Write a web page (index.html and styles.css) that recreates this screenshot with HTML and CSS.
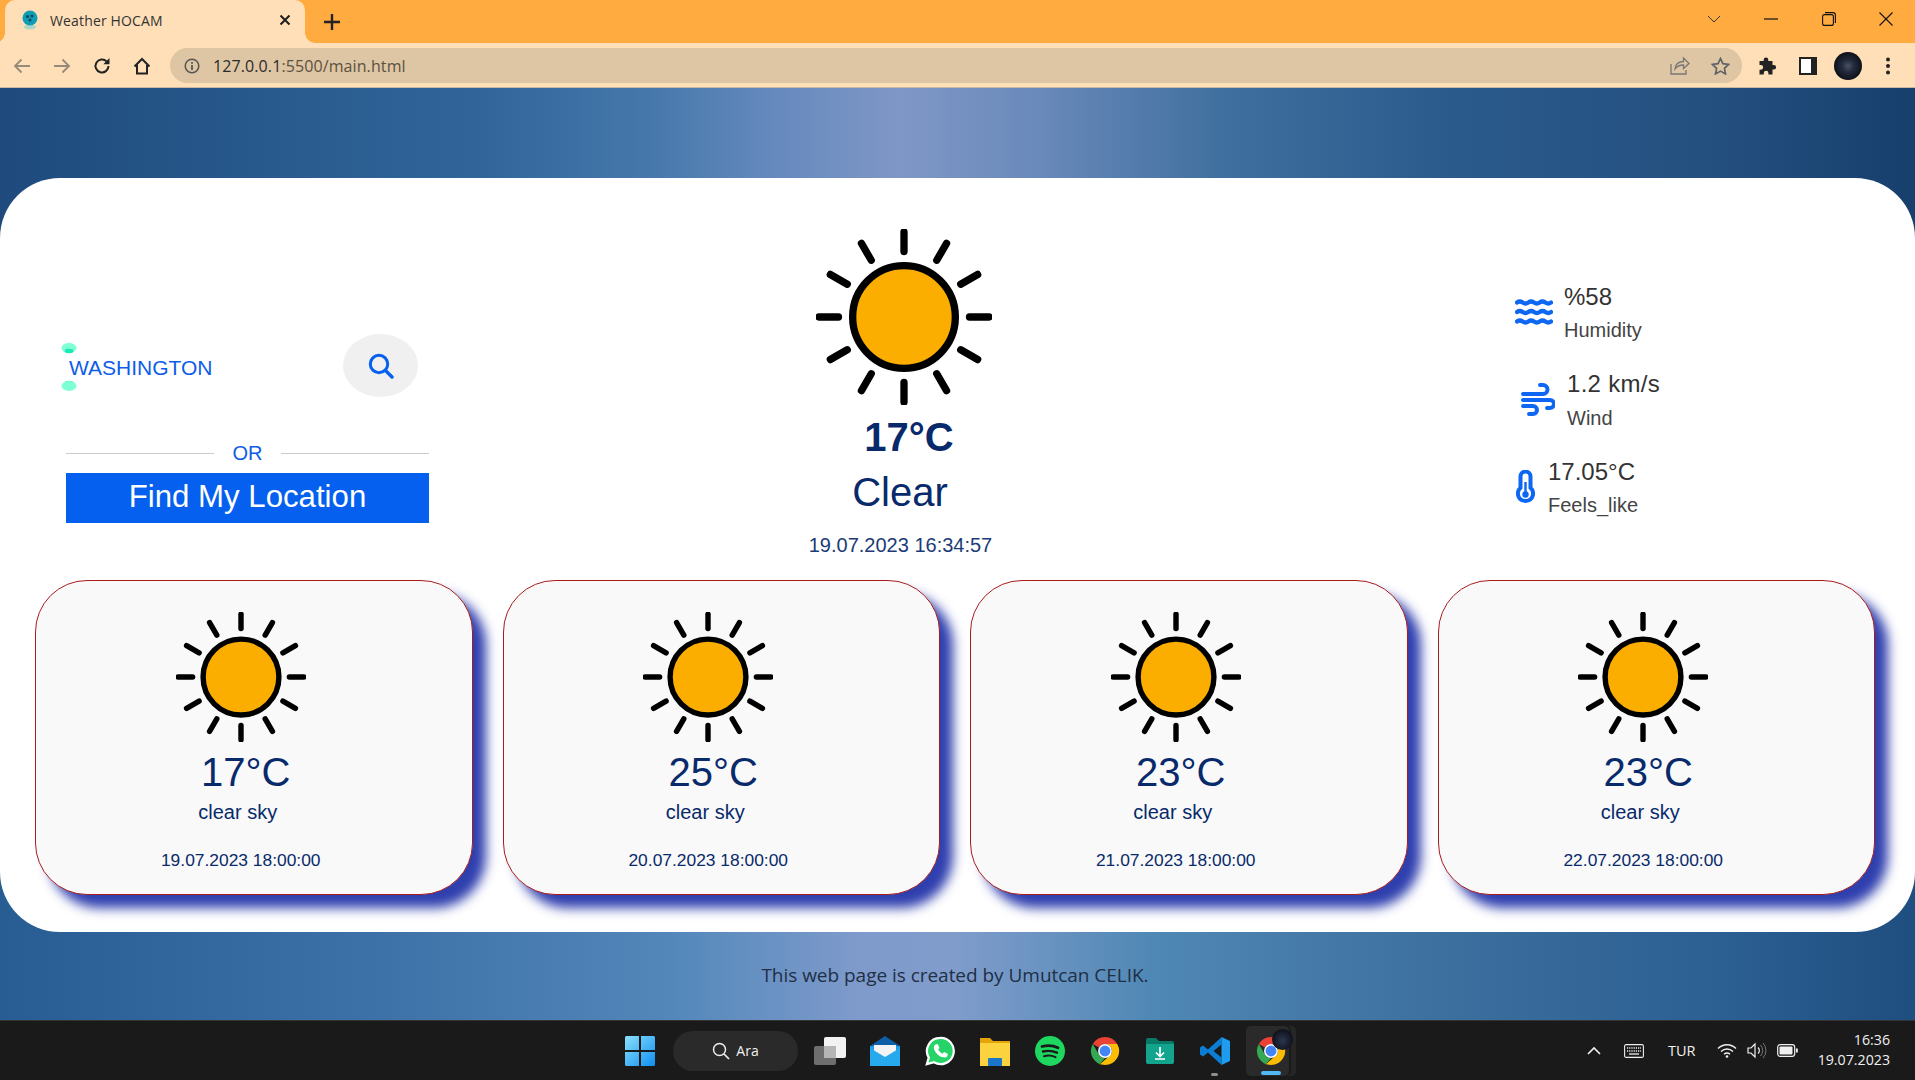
FILE: index.html
```html
<!DOCTYPE html>
<html lang="en">
<head>
<meta charset="utf-8">
<title>Weather HOCAM</title>
<link rel="stylesheet" href="styles.css">
</head>
<body>
<svg class="defs" width="0" height="0" aria-hidden="true">
  <defs>
    <symbol id="sun" viewBox="-90 -90 180 180">
      <circle r="52.500" fill="#fbae00" stroke="#000" stroke-width="7.500"/>
      <g stroke="#000" stroke-width="7.500" stroke-linecap="round">
        <line y1="-67" y2="-87"/>
        <line y1="-67" y2="-87" transform="rotate(30)"/>
        <line y1="-67" y2="-87" transform="rotate(60)"/>
        <line y1="-67" y2="-87" transform="rotate(90)"/>
        <line y1="-67" y2="-87" transform="rotate(120)"/>
        <line y1="-67" y2="-87" transform="rotate(150)"/>
        <line y1="-67" y2="-87" transform="rotate(180)"/>
        <line y1="-67" y2="-87" transform="rotate(210)"/>
        <line y1="-67" y2="-87" transform="rotate(240)"/>
        <line y1="-67" y2="-87" transform="rotate(270)"/>
        <line y1="-67" y2="-87" transform="rotate(300)"/>
        <line y1="-67" y2="-87" transform="rotate(330)"/>
      </g>
    </symbol>
    <symbol id="chrome" viewBox="0 0 32 32">
      <path d="M16 1a15 15 0 0 1 13 7.500H16a7.500 7.500 0 0 0-6.500 3.750L3 8.500A15 15 0 0 1 16 1z" fill="#ea4335"/>
      <path d="M3 8.500l6.500 11.250A7.500 7.500 0 0 0 16 23.500l-5.500 6.500A15 15 0 0 1 3 8.500z" fill="#34a853"/>
      <path d="M29 8.500A15 15 0 0 1 16 31l-5.500-1 .0-.0L22.500 19.750A7.500 7.500 0 0 0 22.500 12.250 7.500 7.500 0 0 0 16 8.500z" fill="#fbbc04"/>
      <circle cx="16" cy="16" r="7.400" fill="#fff"/>
      <circle cx="16" cy="16" r="5.800" fill="#4285f4"/>
    </symbol>
  </defs>
</svg>

<header class="browser">
  <div class="tabstrip">
    <div class="tab">
      <svg class="favicon" width="18" height="20" viewBox="0 0 18 20"><ellipse cx="9" cy="17" rx="6" ry="2.500" fill="#a9d7c8"/><circle cx="9" cy="8" r="7.500" fill="#0e9db5"/><circle cx="6.500" cy="6.500" r="1.500" fill="#0b4660"/><circle cx="11" cy="6" r="1.500" fill="#0b4660"/><circle cx="9" cy="10" r="1.500" fill="#0b4660"/></svg>
      <span class="tab-title">Weather HOCAM</span>
      <svg class="tab-close" width="12" height="12" viewBox="0 0 12 12"><path d="M1.500 1.500l9 9M10.500 1.500l-9 9" stroke="#1d1d1d" stroke-width="2" fill="none"/></svg>
    </div>
    <svg class="new-tab" width="18" height="18" viewBox="0 0 18 18"><path d="M9 1v16M1 9h16" stroke="#222" stroke-width="2.400" fill="none"/></svg>
    <div class="win-controls">
      <span class="win-btn"><svg width="14" height="8" viewBox="0 0 14 8"><path d="M1 1l6 6 6-6" stroke="#333" stroke-width="1" fill="none"/></svg></span>
      <span class="win-btn"><svg width="14" height="2" viewBox="0 0 14 2"><path d="M0 1h14" stroke="#111" stroke-width="1.200"/></svg></span>
      <span class="win-btn"><svg width="14" height="14" viewBox="0 0 14 14"><rect x=".6" y="2.600" width="10.800" height="10.800" rx="2" fill="none" stroke="#111" stroke-width="1.100"/><path d="M3 .6h8a2.400 2.400 0 0 1 2.400 2.400v8" fill="none" stroke="#111" stroke-width="1.100"/></svg></span>
      <span class="win-btn"><svg width="14" height="14" viewBox="0 0 14 14"><path d="M.5.500l13 13M13.500.500l-13 13" stroke="#111" stroke-width="1.100" fill="none"/></svg></span>
    </div>
  </div>
  <div class="toolbar">
    <span class="tool-btn"><svg width="18" height="16" viewBox="0 0 18 16"><path d="M17 8H2M8.500 1.500L2 8l6.500 6.500" stroke="#978a78" stroke-width="1.800" fill="none"/></svg></span>
    <span class="tool-btn"><svg width="18" height="16" viewBox="0 0 18 16"><path d="M1 8h15M9.500 1.500L16 8l-6.500 6.500" stroke="#978a78" stroke-width="1.800" fill="none"/></svg></span>
    <span class="tool-btn"><svg width="18" height="18" viewBox="0 0 18 18"><path d="M15.500 9a6.500 6.500 0 1 1-1.900-4.600" stroke="#222" stroke-width="2" fill="none"/><path d="M16.500 1v6.200h-6.200z" fill="#222"/></svg></span>
    <span class="tool-btn"><svg width="18" height="18" viewBox="0 0 18 18"><path d="M1.500 9.500L9 2l7.500 7.500M4 8v8.500h10V8" stroke="#222" stroke-width="2" fill="none"/></svg></span>
    <div class="omnibox">
      <svg class="info" width="16" height="16" viewBox="0 0 16 16"><circle cx="8" cy="8" r="6.800" fill="none" stroke="#555" stroke-width="1.500"/><path d="M8 7v5M8 4v1.800" stroke="#555" stroke-width="1.800"/></svg>
      <span class="url"><span class="url-host">127.0.0.1</span>:5500/main.html</span>
      <span class="omni-btn"><svg width="20" height="19" viewBox="0 0 20 19"><path d="M1 8v10h15v-4" stroke="#777" stroke-width="1.300" fill="none"/><path d="M5 13c0-5 4-7.500 8.500-7.500V2l5.500 5.500-5.500 5V9C10 9 7 10 5 13z" stroke="#777" stroke-width="1.300" fill="none"/></svg></span>
      <span class="omni-btn"><svg width="19" height="18" viewBox="0 0 19 18"><path d="M9.500 1.500l2.400 5.200 5.600.7-4.100 3.900 1.100 5.600-5-2.800-5 2.800 1.100-5.600L1.500 7.400l5.600-.7z" stroke="#5f6368" stroke-width="1.700" fill="none"/></svg></span>
    </div>
    <span class="tool-btn"><svg width="18" height="18" viewBox="0 0 18 18"><path d="M7 .5a2.300 2.300 0 0 1 2.300 2.300V4h4.200v4h1.300a2.300 2.300 0 0 1 0 4.600h-1.300v4.900H9.400v-1.400a2.300 2.300 0 0 0-4.600 0v1.400H.5v-4.800h1.300a2.400 2.400 0 0 0 0-4.800H.5V4h4.200V2.800A2.300 2.300 0 0 1 7 .5z" fill="#222"/></svg></span>
    <span class="tool-btn"><svg width="18" height="18" viewBox="0 0 18 18"><rect x="1" y="1" width="16" height="16" fill="#fff" stroke="#222" stroke-width="2"/><rect x="12" y="1" width="5" height="16" fill="#222"/></svg></span>
    <span class="tool-btn"><span class="avatar"></span></span>
    <span class="tool-btn"><svg width="6" height="18" viewBox="0 0 6 18"><circle cx="3" cy="2.500" r="2" fill="#222"/><circle cx="3" cy="9" r="2" fill="#222"/><circle cx="3" cy="15.500" r="2" fill="#222"/></svg></span>
  </div>
</header>

<div class="page">
  <main class="panel">
    <section class="current">
      <div class="search-col">
        <div class="search-row">
          <span class="city-wrap">
            <svg class="city-marks" width="16" height="48" viewBox="0 0 16 48"><ellipse cx="8" cy="5" rx="7.500" ry="5" fill="#7fffd4"/><ellipse cx="8" cy="8" rx="4.500" ry="2.200" fill="#1de9b6"/><ellipse cx="8" cy="40" rx="4.500" ry="2.200" fill="#1de9b6"/><ellipse cx="8" cy="43" rx="7.500" ry="5" fill="#7fffd4"/></svg>
            <span class="city">WASHINGTON</span>
          </span>
          <button class="search-btn" type="button"><svg width="26" height="26" viewBox="0 0 26 26"><circle cx="11" cy="11" r="8.700" fill="none" stroke="#0560ef" stroke-width="3"/><path d="M17.500 17.500L24 24" stroke="#0560ef" stroke-width="3.400" stroke-linecap="round"/></svg></button>
        </div>
        <div class="or-row"><span class="or-line"></span><span class="or-text">OR</span><span class="or-line"></span></div>
        <button class="locate-btn" type="button">Find My Location</button>
      </div>
      <div class="now">
        <svg class="now-sun" width="176" height="176"><use href="#sun"/></svg>
        <div class="now-temp">17°C</div>
        <div class="now-desc">Clear</div>
        <div class="now-date">19.07.2023 16:34:57</div>
      </div>
      <div class="stats">
        <div class="stat stat-humidity">
          <svg width="38" height="26" viewBox="0 0 38 26"><g fill="none" stroke="#0d67f2" stroke-width="4.200" stroke-linecap="round"><path d="M2 3.500q2.800-2 5.670 0t5.670 0 5.670 0 5.670 0 5.670 0 5.670 0"/><path d="M2 13q2.800-2 5.670 0t5.670 0 5.670 0 5.670 0 5.670 0 5.670 0"/><path d="M2 22.500q2.800-2 5.670 0t5.670 0 5.670 0 5.670 0 5.670 0 5.670 0"/></g></svg>
          <div class="stat-text"><div class="stat-value">%58</div><div class="stat-label">Humidity</div></div>
        </div>
        <div class="stat stat-wind">
          <svg width="34" height="34" viewBox="0 0 34 34"><g fill="none" stroke="#0d67f2" stroke-width="4" stroke-linecap="round"><path d="M19 2h3a4.500 4.500 0 0 1 0 9H2"/><path d="M2 17h27a4 4 0 0 1 0 8h-3"/><path d="M2 23h10a4 4 0 0 1 0 8H8"/></g></svg>
          <div class="stat-text"><div class="stat-value">1.2 km/s</div><div class="stat-label">Wind</div></div>
        </div>
        <div class="stat stat-feels">
          <svg width="19" height="34" viewBox="0 0 19 34"><path d="M4.500 6.500a5 5 0 0 1 10 0v11.300a7.600 7.600 0 1 1-10 0z" fill="none" stroke="#0d67f2" stroke-width="4"/><circle cx="9.500" cy="24.500" r="3.200" fill="#0d67f2"/><path d="M9.500 12v12" stroke="#0d67f2" stroke-width="2.400"/></svg>
          <div class="stat-text"><div class="stat-value">17.05°C</div><div class="stat-label">Feels_like</div></div>
        </div>
      </div>
    </section>
    <section class="forecast">
      <article class="day">
        <div class="day-inner">
          <svg class="day-sun" width="130" height="130"><use href="#sun"/></svg>
          <div class="day-temp">17°C</div>
          <div class="day-desc">clear sky</div>
          <div class="day-date">19.07.2023 18:00:00</div>
        </div>
      </article>
      <article class="day">
        <div class="day-inner">
          <svg class="day-sun" width="130" height="130"><use href="#sun"/></svg>
          <div class="day-temp">25°C</div>
          <div class="day-desc">clear sky</div>
          <div class="day-date">20.07.2023 18:00:00</div>
        </div>
      </article>
      <article class="day">
        <div class="day-inner">
          <svg class="day-sun" width="130" height="130"><use href="#sun"/></svg>
          <div class="day-temp">23°C</div>
          <div class="day-desc">clear sky</div>
          <div class="day-date">21.07.2023 18:00:00</div>
        </div>
      </article>
      <article class="day">
        <div class="day-inner">
          <svg class="day-sun" width="130" height="130"><use href="#sun"/></svg>
          <div class="day-temp">23°C</div>
          <div class="day-desc">clear sky</div>
          <div class="day-date">22.07.2023 18:00:00</div>
        </div>
      </article>
    </section>
  </main>
  <footer class="credit">This web page is created by Umutcan CELIK.</footer>
</div>

<div class="taskbar">
  <div class="task-apps">
    <span class="task-icon"><svg width="30" height="30" viewBox="0 0 30 30"><defs><linearGradient id="winb" x1="0" y1="0" x2="1" y2="1"><stop offset="0" stop-color="#8be0fb"/><stop offset="1" stop-color="#0d8ff0"/></linearGradient></defs><path d="M0 1.500A1.500 1.500 0 0 1 1.500 0H14v14H0zM16 0h12.500A1.500 1.500 0 0 1 30 1.500V14H16zM0 16h14v14H1.500A1.500 1.500 0 0 1 0 28.500zM16 16h14v12.500a1.500 1.500 0 0 1-1.500 1.500H16z" fill="url(#winb)"/></svg></span>
    <span class="task-search"><svg width="18" height="18" viewBox="0 0 18 18"><circle cx="7.500" cy="7.500" r="6" fill="none" stroke="#eee" stroke-width="1.500"/><path d="M12 12l5 5" stroke="#eee" stroke-width="1.700"/></svg><span>Ara</span></span>
    <span class="task-icon"><svg width="32" height="28" viewBox="0 0 32 28"><rect x="0" y="9" width="22" height="19" rx="2" fill="#6e6e6e"/><rect x="10" y="0" width="22" height="21" rx="2" fill="#f2f2f2"/><rect x="10" y="9" width="12" height="12" fill="#b5b5b5"/></svg></span>
    <span class="task-icon"><svg width="30" height="30" viewBox="0 0 30 30"><path d="M15 0L30 10v3H0v-3z" fill="#0f5fa8"/><path d="M0 10h30v20H0z" fill="#1e9be8"/><path d="M4 9h22v8l-11 7-11-7z" fill="#f4f4f4"/><path d="M0 12l15 9 15-9v18H0z" fill="#27a9ee"/></svg></span>
    <span class="task-icon"><svg width="30" height="30" viewBox="0 0 32 32"><path d="M16 2A14 14 0 0 0 4 23L2 30l7.500-2A14 14 0 1 0 16 2z" fill="#25d366" stroke="#fff" stroke-width="2.400"/><path d="M11 9l2.500-.5 2 4.200-1.500 1.800c1 2 2.500 3.300 4.500 4.300l1.800-1.800 4 2-.4 2.500c-1.200 1.500-3.500 1.700-5.500 1-4-1.400-7.500-4.800-8.700-8.500-.5-2-.2-4 1.300-5z" fill="#fff"/></svg></span>
    <span class="task-icon"><svg width="30" height="30" viewBox="0 0 30 30"><path d="M0 2h10l3 3h17v4H0z" fill="#e5a50a"/><path d="M0 7h30v23H0z" fill="#fcd33f"/><rect x="8" y="22" width="14" height="8" rx="1" fill="#1976c9"/></svg></span>
    <span class="task-icon"><svg width="30" height="30" viewBox="0 0 30 30"><circle cx="15" cy="15" r="15" fill="#1ed760"/><g fill="none" stroke="#1a1a1a" stroke-linecap="round"><path d="M7 10.500c6-1.600 11-1.200 16 1.300" stroke-width="2.800"/><path d="M8 15.500c5-1.200 9.500-.8 14 1.200" stroke-width="2.400"/><path d="M9 20.200c4-1 8-.7 11.500 1" stroke-width="2"/></g></svg></span>
    <span class="task-icon"><svg width="30" height="30"><use href="#chrome"/></svg></span>
    <span class="task-icon"><svg width="28" height="26" viewBox="0 0 28 26"><path d="M0 2a2 2 0 0 1 2-2h8l3 3h13a2 2 0 0 1 2 2v4H0z" fill="#0a7a68"/><path d="M0 6h28v18a2 2 0 0 1-2 2H2a2 2 0 0 1-2-2z" fill="#12a48c"/><path d="M14 9v9M10 14.500l4 4 4-4M9 21h10" stroke="#fff" stroke-width="1.700" fill="none"/></svg></span>
    <span class="task-icon task-pin"><svg width="30" height="30" viewBox="0 0 30 30"><path d="M21.500 1L8 13.500 3 9.500 0 11.500v7L3 20.500 8 16.500 21.500 29V21.500L13.500 15 21.500 8.500z" fill="#0b7dd3"/><path d="M21.500 1L30 5v20l-8.500 4V21.500l0-13z" fill="#1f9cf0"/></svg></span>
    <span class="task-icon task-active">
      <svg width="30" height="30"><use href="#chrome"/></svg>
      <span class="task-badge"></span>
    </span>
  </div>
  <div class="tray">
    <svg class="tray-caret" width="14" height="9" viewBox="0 0 14 9"><path d="M1 8l6-6 6 6" stroke="#f0f0f0" stroke-width="1.600" fill="none"/></svg>
    <svg class="tray-kbd" width="20" height="14" viewBox="0 0 20 14"><rect x=".6" y=".6" width="18.800" height="12.800" rx="1.500" fill="none" stroke="#eee" stroke-width="1.100"/><path d="M3 4h14M3 7h14" stroke="#eee" stroke-width="1.400" stroke-dasharray="1.200 1"/><path d="M5 10h10" stroke="#eee" stroke-width="1.300"/></svg>
    <span class="tray-lang">TUR</span>
    <svg class="tray-wifi" width="20" height="15" viewBox="0 0 20 15"><g fill="none" stroke="#f0f0f0" stroke-width="1.400"><path d="M1 5.500c5-5 13-5 18 0"/><path d="M4 8.500c3.500-3.300 8.500-3.300 12 0"/><path d="M7 11.200c1.800-1.500 4.200-1.500 6 0"/></g><circle cx="10" cy="13.500" r="1.300" fill="#f0f0f0"/></svg>
    <svg class="tray-vol" width="20" height="17" viewBox="0 0 20 17"><path d="M1 6h3l4-4v13l-4-4H1z" fill="none" stroke="#f0f0f0" stroke-width="1.200"/><path d="M11 5.500a4 4 0 0 1 0 6" fill="none" stroke="#f0f0f0" stroke-width="1.200"/><path d="M13.500 3a8 8 0 0 1 0 11M16 1a11 11 0 0 1 0 15" fill="none" stroke="#777" stroke-width="1"/></svg>
    <svg class="tray-batt" width="21" height="13" viewBox="0 0 21 13"><rect x=".7" y=".7" width="17" height="11.600" rx="2.500" fill="none" stroke="#f0f0f0" stroke-width="1.200"/><rect x="2.500" y="2.500" width="13" height="8" rx="1" fill="#f0f0f0"/><rect x="19" y="4.500" width="1.800" height="4" fill="#f0f0f0"/></svg>
    <div class="clock"><div>16:36</div><div>19.07.2023</div></div>
  </div>
</div>
</body>
</html>
```

FILE: styles.css
```css
* {
  box-sizing: border-box;
}

html,
body {
  margin: 0;
  height: 100%;
  overflow: hidden;
}

body {
  width: 1915px;
  height: 1080px;
  display: flex;
  flex-direction: column;
  font-family: "Liberation Sans", Arial, sans-serif;
}

.defs {
  position: absolute;
}

/* Browser frame */
.browser {
  flex: none;
  height: 88px;
  display: flex;
  flex-direction: column;
  background: #ffdfb7;
}

.tabstrip {
  height: 43px;
  display: flex;
  align-items: center;
  padding-left: 5px;
  background: #ffab40;
}

.tab {
  position: relative;
  width: 300px;
  height: 43px;
  display: flex;
  align-items: center;
  padding: 0 0 3px 16px;
  background: #ffdfb7;
  border-radius: 10px 10px 0 0;
  font-family: "Open Sans", "Noto Sans", sans-serif;
}

.tab::before,
.tab::after {
  content: "";
  position: absolute;
  bottom: 0;
  width: 10px;
  height: 10px;
}

.tab::before {
  left: -10px;
  background: radial-gradient(circle at 0 0, #ffab40 9.500px, #ffdfb7 10px);
}

.tab::after {
  right: -10px;
  background: radial-gradient(circle at 100% 0, #ffab40 9.500px, #ffdfb7 10px);
}

.favicon {
  flex: none;
}

.tab-title {
  margin-left: 11px;
  font-size: 14px;
  letter-spacing: 0.15px;
  color: #333;
  white-space: nowrap;
}

.tab-close {
  margin-left: auto;
  margin-right: 14px;
}

.new-tab {
  margin-left: 18px;
}

.win-controls {
  margin-left: auto;
  display: flex;
  padding-bottom: 6px;
}

.win-btn {
  width: 57.500px;
  display: flex;
  justify-content: center;
  align-items: center;
}

.toolbar {
  height: 45px;
  display: flex;
  align-items: center;
  padding: 1px 7px 0 2px;
  border-bottom: 1px solid #c9b9a1;
}

.tool-btn {
  flex: none;
  width: 40px;
  height: 36px;
  display: flex;
  align-items: center;
  justify-content: center;
}

.omnibox {
  flex: 1;
  height: 35px;
  margin: 0 6px 0 8px;
  padding: 0 2px 0 14px;
  display: flex;
  align-items: center;
  background: #dec5a3;
  border-radius: 18px;
}

.url {
  margin-left: 13px;
  font-family: "Open Sans", "Noto Sans", sans-serif;
  font-size: 16px;
  letter-spacing: 0.1px;
  color: #5b5142;
}

.url-host {
  color: #2b2b2b;
}

.omni-btn {
  width: 40px;
  display: flex;
  justify-content: center;
}

.url + .omni-btn {
  margin-left: auto;
}

.avatar {
  width: 28px;
  height: 28px;
  border-radius: 50%;
  background: radial-gradient(ellipse at 50% 50%, #4a5468 0, #232b3d 30%, #05070d 85%);
}

/* Page */
.page {
  flex: none;
  height: 932px;
  padding-top: 90px;
  background:
    linear-gradient(90deg, #1e4a7d 0, #2a5c8f 16%, #31659a 25%, #4678ab 34%, #6488bd 40%, #7f97c6 47%, #6a8abb 54%, #3f6f9e 64%, #2a5a8c 76%, #24507f 89%, #173f6d 100%) top / 100% 50% no-repeat,
    linear-gradient(90deg, #275d92 0, #3d72a8 20%, #5387ba 35%, #7f9bcc 45%, #7f9ccb 50%, #5088b5 60%, #3d709f 75%, #2c5f92 90%, #1f4e80 100%);
}

.panel {
  height: 754px;
  background: #fff;
  border-radius: 60px;
  color: #082a6b;
}

/* Current weather */
.current {
  height: 402px;
  display: flex;
}

.search-col {
  flex: none;
  width: 363px;
  margin-left: 66px;
  padding-top: 156px;
}

.search-row {
  height: 63px;
  display: flex;
  justify-content: space-between;
  padding-right: 11px;
}

.city-wrap {
  position: relative;
  display: block;
  padding: 22px 0 0 3px;
}

.city-marks {
  position: absolute;
  left: -5px;
  top: 9px;
}

.city {
  font-size: 21px;
  line-height: 24px;
  color: #0d5de8;
}

.search-btn {
  width: 75px;
  height: 63px;
  padding: 0;
  border: 0;
  border-radius: 50%;
  background: #f0f0f0;
  display: flex;
  align-items: center;
  justify-content: center;
}

.or-row {
  height: 24px;
  margin-top: 44px;
  display: flex;
  align-items: center;
  color: #0d5de8;
}

.or-line {
  flex: 1;
  height: 1px;
  background: #ccc;
}

.or-text {
  width: 67px;
  text-align: center;
  font-size: 20px;
}

.locate-btn {
  display: block;
  width: 100%;
  height: 50px;
  margin-top: 8px;
  border: 0;
  padding: 0 0 2px;
  background: #0560ef;
  color: #fff;
  font: 31.200px/48px "Liberation Sans", Arial, sans-serif;
}

.now {
  flex: none;
  width: 320px;
  margin-left: 315px;
  padding-top: 51px;
  display: flex;
  flex-direction: column;
  align-items: center;
}

.now-sun {
  display: block;
}

.now-temp {
  margin-top: 9px;
  padding-left: 10px;
  font-size: 40px;
  line-height: 46px;
  font-weight: 700;
}

.now-desc {
  margin-top: 9px;
  padding-right: 8px;
  font-size: 40px;
  line-height: 46px;
}

.now-date {
  margin-top: 18px;
  padding-right: 7px;
  font-size: 20px;
  line-height: 24px;
  color: #1c3b78;
}

.stats {
  flex: none;
  margin-left: 451px;
  padding-top: 104px;
  color: #333;
}

.stat {
  display: flex;
  align-items: center;
  height: 60px;
  margin-bottom: 27px;
}

.stat-text {
  white-space: nowrap;
}

.stat-value {
  font-size: 24px;
  line-height: 28px;
}

.stat-label {
  margin-top: 7px;
  font-size: 20px;
  line-height: 24px;
  color: #444;
}

.stat-humidity .stat-text {
  margin-left: 11px;
}

.stat-wind {
  height: 61px;
  padding-left: 6px;
}

.stat-wind .stat-value {
  letter-spacing: 0.3px;
}

.stat-wind .stat-label {
  margin-top: 8px;
}

.stat-wind .stat-text {
  margin-left: 12px;
}

.stat-feels {
  padding-left: 1px;
}

.stat-feels .stat-text {
  margin-left: 13px;
}

/* Forecast */
.forecast {
  display: flex;
  gap: 30px;
  padding-left: 35px;
}

.day {
  flex: none;
  width: 437.500px;
  height: 315px;
  padding: 31px 26px 0 0;
  background: #f9f9f9;
  border: 1px solid #a81c1c;
  border-radius: 52px;
  box-shadow: 13px 13px 12px #2f3fae;
  color: #082a6b;
}

.day-inner {
  display: flex;
  flex-direction: column;
  align-items: center;
}

.day-sun {
  display: block;
}

.day-temp {
  margin-top: 7px;
  padding-left: 10px;
  font-size: 40px;
  line-height: 46px;
}

.day-desc {
  margin-top: 5px;
  padding-right: 6px;
  font-size: 20px;
  line-height: 24px;
}

.day-date {
  margin-top: 25px;
  font-size: 17.400px;
  line-height: 22px;
}

.credit {
  margin-top: 30px;
  padding-right: 5px;
  text-align: center;
  font-family: "Open Sans", "Noto Sans", sans-serif;
  font-size: 19px;
  line-height: 26px;
  letter-spacing: -0.03px;
  color: #1f2f45;
}

/* Windows taskbar */
.taskbar {
  flex: none;
  height: 60px;
  display: flex;
  align-items: center;
  padding-left: 612px;
  background: #1a1a1a;
  border-top: 1px solid #333;
  color: #f0f0f0;
  font-family: "Open Sans", "Noto Sans", sans-serif;
}

.task-apps {
  display: flex;
  align-items: center;
}

.task-icon {
  position: relative;
  flex: none;
  width: 55px;
  height: 50px;
  display: flex;
  align-items: center;
  justify-content: center;
}

.task-search {
  flex: none;
  width: 125px;
  height: 40px;
  margin: 0 4px 0 6px;
  display: flex;
  align-items: center;
  justify-content: center;
  gap: 6px;
  background: #2a2a2a;
  border-radius: 20px;
  font-size: 14px;
}

.task-pin::after {
  content: "";
  position: absolute;
  bottom: 0;
  left: 24px;
  width: 7px;
  height: 3px;
  border-radius: 2px;
  background: #8f8f8f;
}

.task-active {
  width: 43px;
  margin-left: 4px;
  padding-left: 7px;
  background: #2a2a2a;
  border-radius: 5px;
  box-shadow: 2px 0 0 #1a1a1a, 7px 0 0 #262626;
}

.task-active::after {
  content: "";
  position: absolute;
  bottom: 1px;
  left: 15px;
  width: 20px;
  height: 4px;
  border-radius: 2px;
  background: #4fb8f5;
}

.task-badge {
  position: absolute;
  top: 3px;
  right: -4px;
  width: 21px;
  height: 21px;
  border-radius: 50%;
  background: radial-gradient(ellipse at 50% 55%, #2c3650 0, #0c0f18 75%);
}

.tray {
  margin-left: 298px;
  flex: 1;
  display: flex;
  align-items: center;
  padding-right: 25px;
}

.tray-kbd {
  margin-left: 23px;
}

.tray-lang {
  margin-left: 24px;
  font-size: 14.500px;
}

.tray-wifi {
  margin-left: 21px;
}

.tray-vol {
  margin-left: 10px;
}

.tray-batt {
  margin-left: 10px;
}

.clock {
  margin-left: auto;
  margin-bottom: 2px;
  text-align: right;
  font-size: 14.200px;
  line-height: 20px;
}
```
